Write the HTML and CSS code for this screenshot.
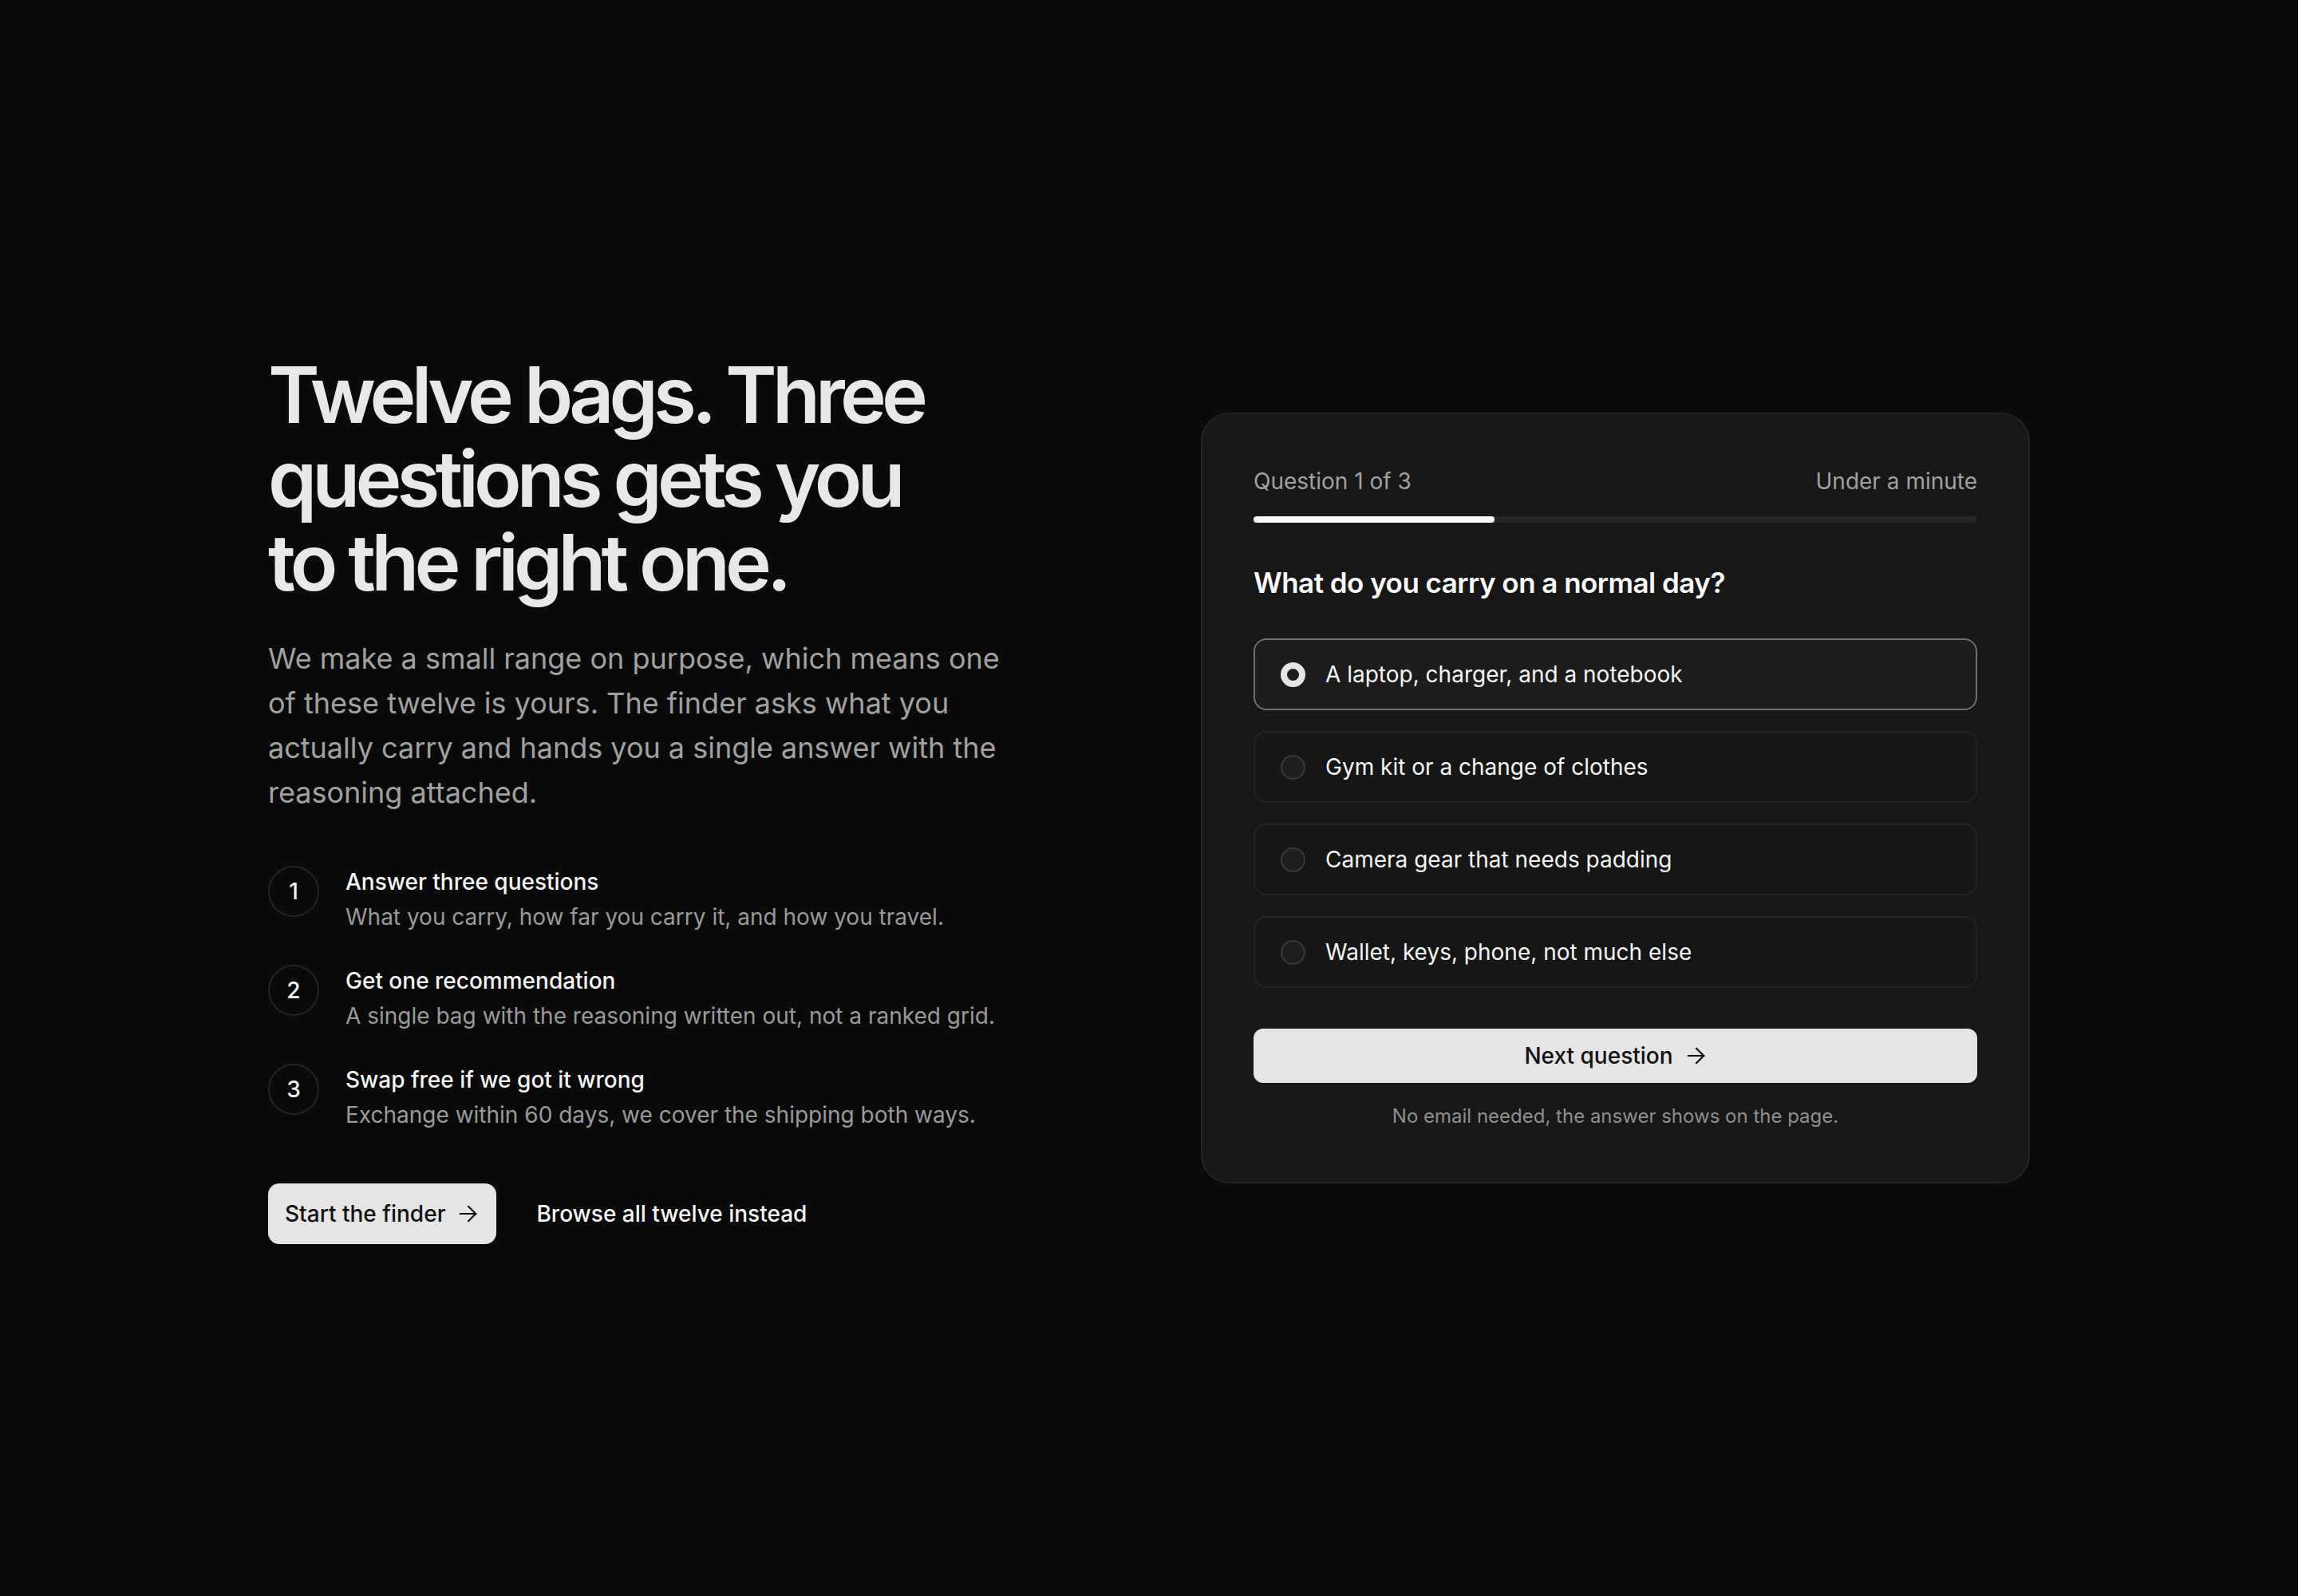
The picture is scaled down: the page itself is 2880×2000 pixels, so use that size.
FILE: index.html
```html
<!DOCTYPE html>
<html lang="en">
<head>
  <meta charset="UTF-8">
  <title>Bag Finder</title>
  <link rel="stylesheet" href="styles.css">
</head>
<body>
  <main class="page">
    <section class="intro">
      <h1>Twelve bags. Three questions gets you to the right one.</h1>
      <p class="lead">
        We make a small range on purpose, which means one of these twelve is yours.
        The finder asks what you actually carry and hands you a single answer with
        the reasoning attached.
      </p>

      <ol class="steps">
        <li class="step">
          <span class="step-num">1</span>
          <div>
            <div class="step-title">Answer three questions</div>
            <div class="step-desc">What you carry, how far you carry it, and how you travel.</div>
          </div>
        </li>
        <li class="step">
          <span class="step-num">2</span>
          <div>
            <div class="step-title">Get one recommendation</div>
            <div class="step-desc">A single bag with the reasoning written out, not a ranked grid.</div>
          </div>
        </li>
        <li class="step">
          <span class="step-num">3</span>
          <div>
            <div class="step-title">Swap free if we got it wrong</div>
            <div class="step-desc">Exchange within 60 days, we cover the shipping both ways.</div>
          </div>
        </li>
      </ol>

      <div class="actions">
        <button class="btn btn-light">
          Start the finder
          <svg class="arrow" viewBox="0 0 24 24"><path d="M2.5 12h18.5M12 3.5l8.5 8.5-8.5 8.5"/></svg>
        </button>
        <a class="link" href="#">Browse all twelve instead</a>
      </div>
    </section>

    <section class="card">
      <div class="card-meta">
        <span>Question 1 of 3</span>
        <span>Under a minute</span>
      </div>
      <div class="progress"><div class="progress-fill" style="width: 33.3%"></div></div>

      <h2 class="question">What do you carry on a normal day?</h2>

      <div class="options">
        <label class="option selected"><span class="radio"></span>A laptop, charger, and a notebook</label>
        <label class="option"><span class="radio"></span>Gym kit or a change of clothes</label>
        <label class="option"><span class="radio"></span>Camera gear that needs padding</label>
        <label class="option"><span class="radio"></span>Wallet, keys, phone, not much else</label>
      </div>

      <button class="btn btn-light btn-block">
        Next question
        <svg class="arrow" viewBox="0 0 24 24"><path d="M2.5 12h18.5M12 3.5l8.5 8.5-8.5 8.5"/></svg>
      </button>
      <p class="note">No email needed, the answer shows on the page.</p>
    </section>
  </main>
</body>
</html>
```

FILE: styles.css
```css
* {
  box-sizing: border-box;
}

body {
  margin: 0;
  background: #0a0a0a;
  color: #ededed;
  font-family: Inter, "Noto Sans", sans-serif;
}

.page {
  width: 2208px;
  min-height: 100vh;
  margin: 0 auto;
  display: grid;
  grid-template-columns: 1fr 1fr;
  column-gap: 130px;
  align-items: center;
}

/* left column */
h1 {
  margin: 0;
  max-width: 880px;
  font-size: 98px;
  line-height: 105px;
  font-weight: 600;
  letter-spacing: -0.06em;
  color: #e8e8e8;
}

.lead {
  margin: 40px 0 0;
  max-width: 940px;
  font-size: 36px;
  line-height: 56px;
  color: #a1a1a1;
}

.steps {
  list-style: none;
  margin: 62px 0 0;
  padding: 0;
  display: flex;
  flex-direction: column;
  gap: 36px;
}

.step {
  display: flex;
  align-items: flex-start;
  gap: 33px;
}

.step-num {
  flex: none;
  width: 64px;
  height: 64px;
  margin-top: 2px;
  border: 2px solid #232323;
  border-radius: 50%;
  display: flex;
  align-items: center;
  justify-content: center;
  font-size: 28px;
  font-weight: 500;
  color: #f5f5f5;
}

.step-title {
  font-size: 28px;
  line-height: 44px;
  font-weight: 500;
  color: #f5f5f5;
}

.step-desc {
  font-size: 28px;
  line-height: 44px;
  color: #9a9a9a;
}

.actions {
  margin-top: 64px;
  display: flex;
  align-items: center;
  gap: 50px;
}

.btn {
  display: inline-flex;
  align-items: center;
  justify-content: center;
  gap: 16px;
  border: none;
  border-radius: 14px;
  font-family: inherit;
  font-size: 28px;
  font-weight: 500;
  cursor: pointer;
}

.btn-light {
  background: #e5e5e5;
  color: #111;
  height: 76px;
  padding: 0 22px 0 21px;
}

.arrow {
  width: 26px;
  height: 26px;
  fill: none;
  stroke: currentColor;
  stroke-width: 2;
  stroke-linecap: round;
  stroke-linejoin: round;
}

.link {
  color: #f5f5f5;
  font-size: 28px;
  font-weight: 500;
  text-decoration: none;
}

/* finder card */
.card {
  background: #171717;
  border: 2px solid #232323;
  border-radius: 36px;
  padding: 64px;
}

.card-meta {
  display: flex;
  justify-content: space-between;
  font-size: 28px;
  line-height: 40px;
  color: #a1a1a1;
}

.progress {
  margin-top: 24px;
  height: 8px;
  border-radius: 4px;
  background: #262626;
}

.progress-fill {
  height: 100%;
  border-radius: 4px;
  background: #fafafa;
}

.question {
  margin: 52px 0 0;
  font-size: 35px;
  line-height: 46px;
  font-weight: 600;
  letter-spacing: -0.015em;
  color: #fafafa;
}

.options {
  margin-top: 47px;
  display: flex;
  flex-direction: column;
  gap: 26px;
}

.option {
  display: flex;
  align-items: center;
  gap: 25px;
  height: 90px;
  padding: 0 32px;
  background: #161616;
  border: 2px solid #232323;
  border-radius: 16px;
  font-size: 28px;
  color: #f5f5f5;
  cursor: pointer;
}

.option.selected {
  background: #1c1c1c;
  border-color: #6e6e6e;
}

.radio {
  flex: none;
  width: 31px;
  height: 31px;
  border-radius: 50%;
  border: 2px solid #3a3a3a;
  background: #1f1f1f;
}

.option.selected .radio {
  border: 8px solid #e5e5e5;
  background: #1c1c1c;
}

.btn-block {
  width: 100%;
  height: 68px;
  margin-top: 51px;
  border-radius: 12px;
  padding: 0;
}

.note {
  margin: 24px 0 0;
  text-align: center;
  font-size: 24px;
  line-height: 36px;
  color: #8f8f8f;
}
```
